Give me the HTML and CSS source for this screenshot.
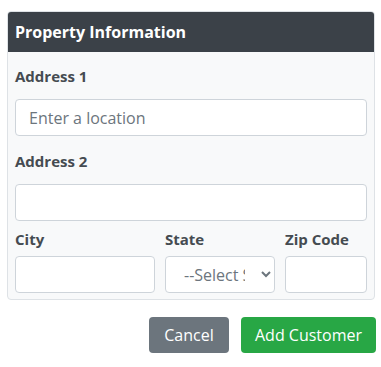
FILE: index.html
```html
<!DOCTYPE html>
<html lang="en">
<head>
    <meta charset="UTF-8">
    <meta name="viewport" content="width=device-width, initial-scale=1.0">
    <title>Property Information</title>
    <link rel="stylesheet" href="styles.css">
</head>
<body>
    <div class="card">
        <div class="card-header">Property Information</div>
        <div class="card-body">
            <div class="form-group">
                <label for="address1">Address 1</label>
                <input type="text" id="address1" placeholder="Enter a location">
            </div>
            <div class="form-group">
                <label for="address2">Address 2</label>
                <input type="text" id="address2">
            </div>
            <div class="form-row">
                <div class="col col-city">
                    <label for="city">City</label>
                    <input type="text" id="city">
                </div>
                <div class="col col-state">
                    <label for="state">State</label>
                    <select id="state">
                        <option>--Select State--</option>
                    </select>
                </div>
                <div class="col col-zip">
                    <label for="zip">Zip Code</label>
                    <input type="text" id="zip">
                </div>
            </div>
        </div>
    </div>
    <div class="actions">
        <button class="btn btn-secondary">Cancel</button>
        <button class="btn btn-success">Add Customer</button>
    </div>
</body>
</html>
```

FILE: styles.css
```css
body {
    font-family: 'Open Sans', 'Liberation Sans', sans-serif;
    margin: 0;
    padding: 11px 6px 0 7px;
    background-color: #fff;
    color: #495057;
}
.card {
    border: 1px solid #dee2e6;
    border-radius: 4px;
    background-color: #f8f9fa;
    overflow: hidden;
}
.card-header {
    background-color: #3b4148;
    color: #fff;
    font-weight: 700;
    font-size: 16px;
    height: 40px;
    display: flex;
    align-items: center;
    padding: 0 7px;
}
.card-body {
    padding: 14px 7px 6px;
}
label {
    display: block;
    font-size: 15px;
    font-weight: 700;
    line-height: 20px;
    color: #454b51;
}
.form-group {
    margin-bottom: 15px;
}
.form-group label {
    margin-bottom: 13px;
}
input, select {
    display: block;
    box-sizing: border-box;
    width: 100%;
    height: 37px;
    border: 1px solid #ced4da;
    border-radius: 4px;
    background-color: #fff;
    font-family: inherit;
    font-size: 16px;
    color: #495057;
    padding: 0 13px;
}
input::placeholder {
    color: #6c757d;
}
select {
    padding-left: 14px;
    color: #6c757d;
}
.form-row {
    display: flex;
    gap: 10px;
    margin-top: -7px;
}
.form-row label {
    margin-bottom: 7px;
}
.col-city {
    width: 140px;
}
.col-state {
    width: 110px;
}
.col-zip {
    flex: 1;
}
.actions {
    display: flex;
    justify-content: flex-end;
    gap: 12px;
    margin-top: 17px;
    margin-right: -1px;
}
.btn {
    height: 36px;
    border: none;
    border-radius: 4px;
    color: #fff;
    font-family: inherit;
    font-size: 16px;
    padding: 0 10px;
}
.btn-secondary {
    background-color: #6c757d;
    width: 80px;
}
.btn-success {
    background-color: #28a745;
    width: 135px;
}
```
